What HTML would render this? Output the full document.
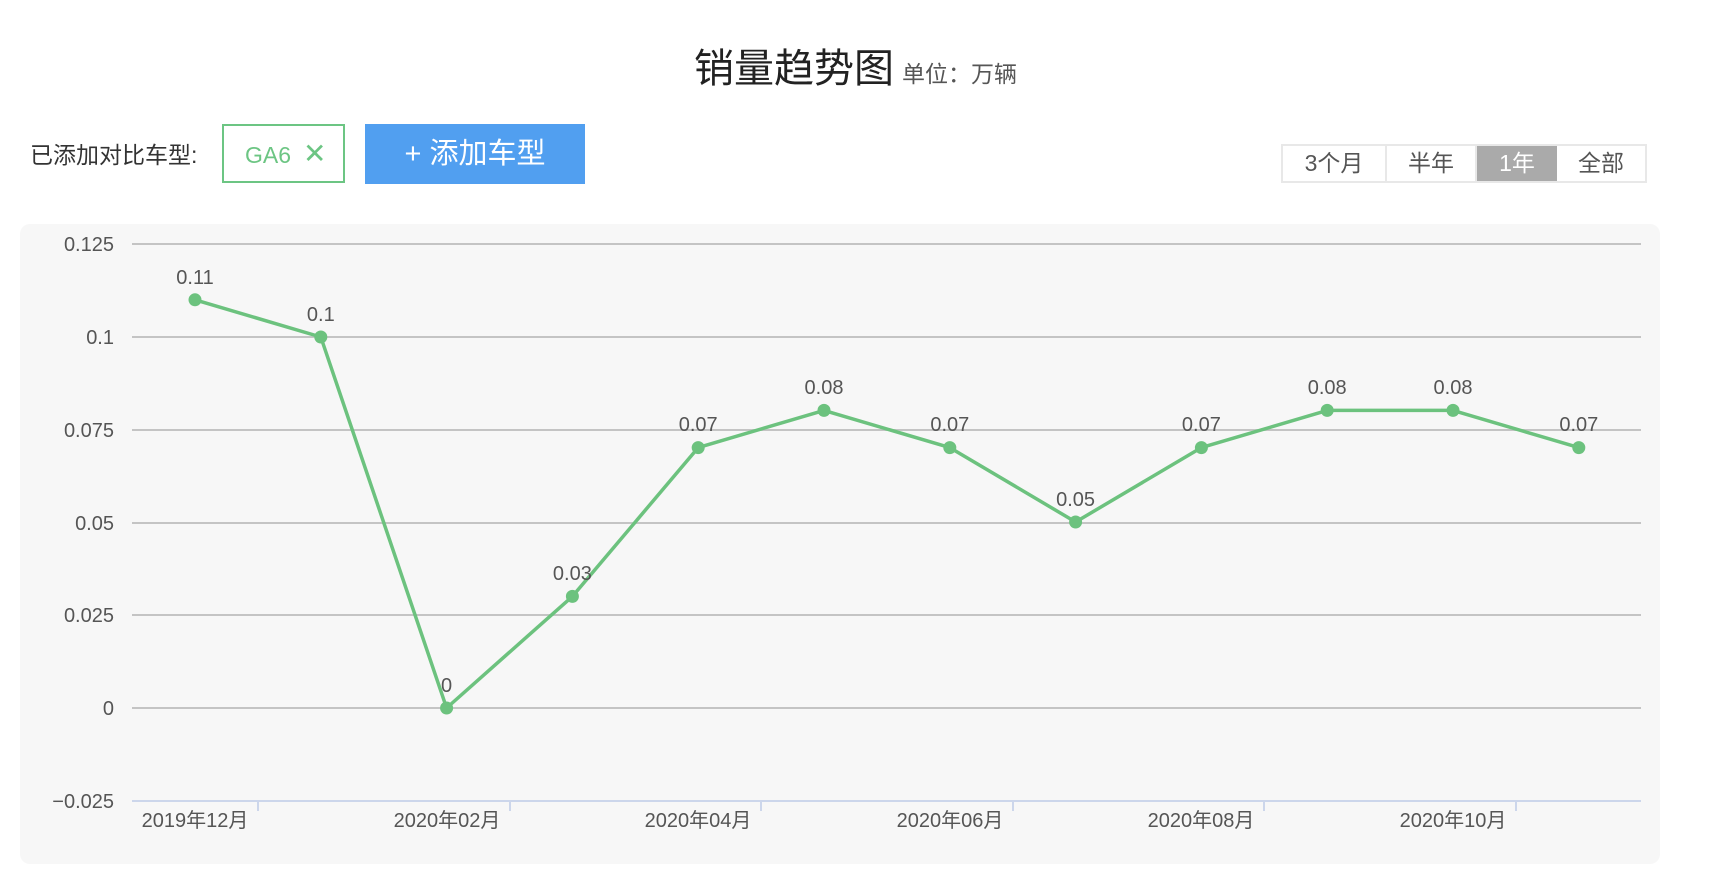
<!DOCTYPE html>
<html><head><meta charset="utf-8"><style>
body{margin:0;width:1714px;height:891px;background:#fff;font-family:"Liberation Sans","Noto Sans CJK SC",sans-serif;position:relative;overflow:hidden}
.a{position:absolute;white-space:nowrap}
</style></head><body>
<div class="a" style="left:694px;top:44px;font-size:40px;color:#222;line-height:50px">销量趋势图<span style="font-size:23px;color:#555;margin-left:8px">单位：万辆</span></div>
<div class="a" style="left:30px;top:140px;font-size:23px;color:#333;line-height:30px">已添加对比车型:</div>
<div class="a" style="left:222px;top:124px;width:119px;height:55px;border:2px solid #6cc583;color:#6cc583;font-size:23px;line-height:55px;box-sizing:content-box"><span style="margin-left:21px">GA6</span><span style="font-size:28px;margin-left:12px">✕</span></div>
<div class="a" style="left:365px;top:124px;width:220px;height:60px;background:#519ff0;color:#fff;font-size:29px;line-height:60px;text-align:center">+ 添加车型</div>
<div class="a" style="left:1281px;top:144px;height:39px;border:2px solid #e8e8e8;box-sizing:border-box;display:flex;font-size:23px;color:#555;line-height:35px;width:366px">
<div style="width:102px;text-align:center;border-right:2px solid #e8e8e8">3个月</div>
<div style="width:88px;text-align:center;border-right:2px solid #e8e8e8">半年</div>
<div style="width:80px;text-align:center;background:#aaa;color:#fff">1年</div>
<div style="flex:1;text-align:center">全部</div></div>
<div class="a" style="left:20px;top:224px;width:1640px;height:640px;background:#f7f7f7;border-radius:10px"></div>
<svg class="a" style="left:0;top:0" width="1714" height="891" font-family="Liberation Sans, Noto Sans CJK SC, sans-serif" font-size="20" fill="#555">
<g stroke="#c4c4c4" stroke-width="2">
<line x1="132" x2="1641" y1="244" y2="244"/><line x1="132" x2="1641" y1="337" y2="337"/><line x1="132" x2="1641" y1="430" y2="430"/><line x1="132" x2="1641" y1="523" y2="523"/><line x1="132" x2="1641" y1="615" y2="615"/><line x1="132" x2="1641" y1="708" y2="708"/></g>
<line x1="132" x2="1641" y1="801" y2="801" stroke="#ccd6eb" stroke-width="2"/>
<g stroke="#ccd6eb" stroke-width="2"><line x1="258" x2="258" y1="801" y2="811"/><line x1="510" x2="510" y1="801" y2="811"/><line x1="761" x2="761" y1="801" y2="811"/><line x1="1013" x2="1013" y1="801" y2="811"/><line x1="1264" x2="1264" y1="801" y2="811"/><line x1="1516" x2="1516" y1="801" y2="811"/></g>
<g text-anchor="end"><text x="114" y="251">0.125</text><text x="114" y="344">0.1</text><text x="114" y="437">0.075</text><text x="114" y="530">0.05</text><text x="114" y="622">0.025</text><text x="114" y="715">0</text><text x="114" y="808">−0.025</text></g>
<g text-anchor="middle"><text x="195" y="827">2019年12月</text><text x="447" y="827">2020年02月</text><text x="698" y="827">2020年04月</text><text x="950" y="827">2020年06月</text><text x="1201" y="827">2020年08月</text><text x="1453" y="827">2020年10月</text></g>
<polyline fill="none" stroke="#6cc27e" stroke-width="3.5" stroke-linejoin="round" points="195,299.8 320.8,337 446.6,708 572.4,596.4 698.2,447.6 824,410.4 949.8,447.6 1075.6,522 1201.4,447.6 1327.2,410.4 1453,410.4 1578.8,447.6"/>
<g fill="#6cc27e"><circle cx="195" cy="299.8" r="6.5"/><circle cx="320.8" cy="337" r="6.5"/><circle cx="446.6" cy="708" r="6.5"/><circle cx="572.4" cy="596.4" r="6.5"/><circle cx="698.2" cy="447.6" r="6.5"/><circle cx="824" cy="410.4" r="6.5"/><circle cx="949.8" cy="447.6" r="6.5"/><circle cx="1075.6" cy="522" r="6.5"/><circle cx="1201.4" cy="447.6" r="6.5"/><circle cx="1327.2" cy="410.4" r="6.5"/><circle cx="1453" cy="410.4" r="6.5"/><circle cx="1578.8" cy="447.6" r="6.5"/></g>
<g text-anchor="middle"><text x="195" y="284">0.11</text><text x="320.8" y="321">0.1</text><text x="446.6" y="692">0</text><text x="572.4" y="580">0.03</text><text x="698.2" y="431">0.07</text><text x="824" y="394">0.08</text><text x="949.8" y="431">0.07</text><text x="1075.6" y="506">0.05</text><text x="1201.4" y="431">0.07</text><text x="1327.2" y="394">0.08</text><text x="1453" y="394">0.08</text><text x="1578.8" y="431">0.07</text></g>
</svg>
</body></html>
